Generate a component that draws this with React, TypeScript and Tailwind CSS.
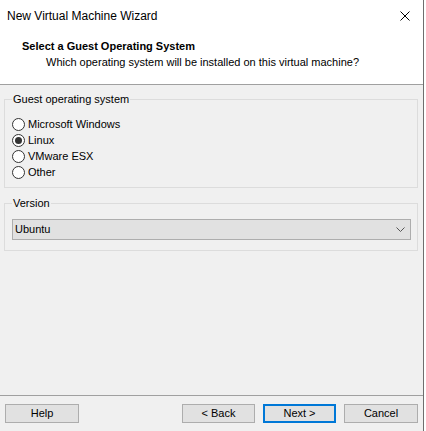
import React, { useState } from 'react';

const font = "font-['Liberation_Sans',Arial,sans-serif]";

const osOptions = ['Microsoft Windows', 'Linux', 'VMware ESX', 'Other'];

const Radio: React.FC<{ label: string; checked: boolean; onSelect: () => void }> = ({ label, checked, onSelect }) => (
  <label className="flex items-center h-[16px] cursor-default" onClick={onSelect}>
    <span className="w-[13px] h-[13px] rounded-full border border-[#333333] bg-white flex items-center justify-center">
      {checked && <span className="w-[7px] h-[7px] rounded-full bg-[#333333]" />}
    </span>
    <span className="ml-[3px] text-[11px] leading-[16px] text-black">{label}</span>
  </label>
);

const WizardButton: React.FC<{ label: string; primary?: boolean; width: string }> = ({ label, primary, width }) => (
  <button
    className={`${width} h-[19px] bg-[#e1e1e1] text-[11px] leading-none text-black flex items-center justify-center ${
      primary ? 'border-2 border-[#0078d7]' : 'border border-[#adadad]'
    }`}
  >
    {label}
  </button>
);

const App: React.FC = () => {
  const [os, setOs] = useState('Linux');

  return (
    <div className={`w-[426px] h-[431px] bg-white flex ${font}`}>
      <div className="w-[424px] h-full bg-[#f0f0f0] border-r border-[#6e6e6e] flex flex-col">
        {/* Title bar */}
        <div className="h-[32px] bg-white flex items-center justify-between pl-[7px] pr-[9px]">
          <span className="text-[12px] text-black">New Virtual Machine Wizard</span>
          <svg width="10" height="10" viewBox="0 0 10 10" className="mr-[4px]">
            <path d="M0.5 0.5 L9.5 9.5 M9.5 0.5 L0.5 9.5" stroke="#000" strokeWidth="1" fill="none" />
          </svg>
        </div>

        {/* Header */}
        <div className="h-[53px] bg-white border-b border-[#a0a0a0] pt-[7px]">
          <div className="pl-[22px] text-[11px] leading-[14px] font-bold text-black">Select a Guest Operating System</div>
          <div className="pl-[46px] mt-[2px] text-[11px] leading-[14px] text-black">
            Which operating system will be installed on this virtual machine?
          </div>
        </div>

        {/* Body */}
        <fieldset className="ml-[4px] mt-[8px] w-[414px] border border-[#dcdcdc] pl-[7px] pt-[10px] pb-[7px]">
          <legend className="px-[1px] text-[11px] leading-[13px] text-black">Guest operating system</legend>
          <div className="flex flex-col">
            {osOptions.map((o) => (
              <Radio key={o} label={o} checked={os === o} onSelect={() => setOs(o)} />
            ))}
          </div>
        </fieldset>

        <fieldset className="ml-[4px] mt-[9px] w-[414px] border border-[#dcdcdc] pl-[7px] pr-[6px] pt-[9px] pb-[10px]">
          <legend className="px-[1px] text-[11px] leading-[13px] text-black">Version</legend>
          <div className="h-[21px] bg-[#e1e1e1] border border-[#adadad] flex items-center justify-between pl-[2px] pr-[5px]">
            <span className="text-[11px] text-black">Ubuntu</span>
            <svg width="9" height="5" viewBox="0 0 9 5">
              <path d="M0.5 0.5 L4.5 4.5 L8.5 0.5" stroke="#555" strokeWidth="1" fill="none" />
            </svg>
          </div>
        </fieldset>

        {/* Footer */}
        <div className="mt-auto border-t border-[#a0a0a0] h-[36px] flex items-start pt-[8px] pl-[5px] pr-[5px]">
          <WizardButton label="Help" width="w-[74px]" />
          <div className="ml-auto flex gap-[8px]">
            <WizardButton label="< Back" width="w-[73px]" />
            <WizardButton label="Next >" width="w-[73px]" primary />
            <WizardButton label="Cancel" width="w-[74px]" />
          </div>
        </div>
      </div>
    </div>
  );
};

export default App;
